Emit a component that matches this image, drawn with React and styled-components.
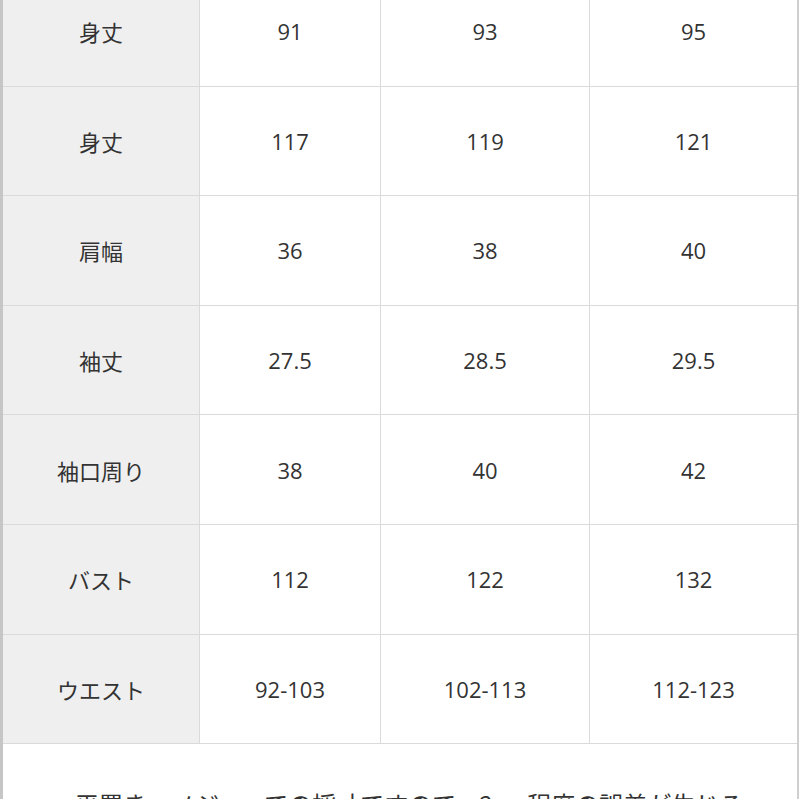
import React from 'react';
import styled, { createGlobalStyle } from 'styled-components';

const Global = createGlobalStyle`
  html, body {
    margin: 0;
    padding: 0;
    background: #fff;
  }
  body {
    font-family: "Open Sans", "Noto Sans CJK JP", sans-serif;
    color: #333;
    overflow: hidden;
  }
`;

const Page = styled.div`
  width: 799px;
  height: 799px;
  overflow: hidden;
`;

const Table = styled.div`
  margin-top: -23px;
  width: 799px;
  box-sizing: border-box;
  border-left: 3px solid #c6c6c6;
  border-right: 2px solid #cfcfcf;
`;

const Row = styled.div`
  display: grid;
  grid-template-columns: 197px 181px 209px 1fr;
  height: 109.6px;
  border-bottom: 1px solid #dadada;
  box-sizing: border-box;
`;

const Cell = styled.div`
  display: flex;
  align-items: center;
  justify-content: center;
  font-size: 22px;
  color: #333;
  background: ${p => (p.$head ? '#efefef' : '#fff')};
  border-right: ${p => (p.$last ? 'none' : '1px solid #dadada')};
  font-family: ${p => (p.$head ? '"Noto Sans CJK JP", sans-serif' : '"Open Sans", "Noto Sans CJK JP", sans-serif')};
`;

const Note = styled.div`
  padding: 42px 0 40px 72px;
  font-size: 24px;
  font-family: "Noto Sans CJK JP", sans-serif;
  color: #333;
  white-space: nowrap;
`;

const rows = [
  ['身丈', '91', '93', '95'],
  ['身丈', '117', '119', '121'],
  ['肩幅', '36', '38', '40'],
  ['袖丈', '27.5', '28.5', '29.5'],
  ['袖口周り', '38', '40', '42'],
  ['バスト', '112', '122', '132'],
  ['ウエスト', '92-103', '102-113', '112-123'],
];

export default function App() {
  return (
    <Page>
      <Global />
      <Table>
        {rows.map((r, i) => (
          <Row key={i}>
            {r.map((v, j) => (
              <Cell key={j} $head={j === 0} $last={j === r.length - 1}>
                {v}
              </Cell>
            ))}
          </Row>
        ))}
        <Note>平置き・メジャーでの採寸ですので、2cm程度の誤差が生じる</Note>
      </Table>
    </Page>
  );
}
